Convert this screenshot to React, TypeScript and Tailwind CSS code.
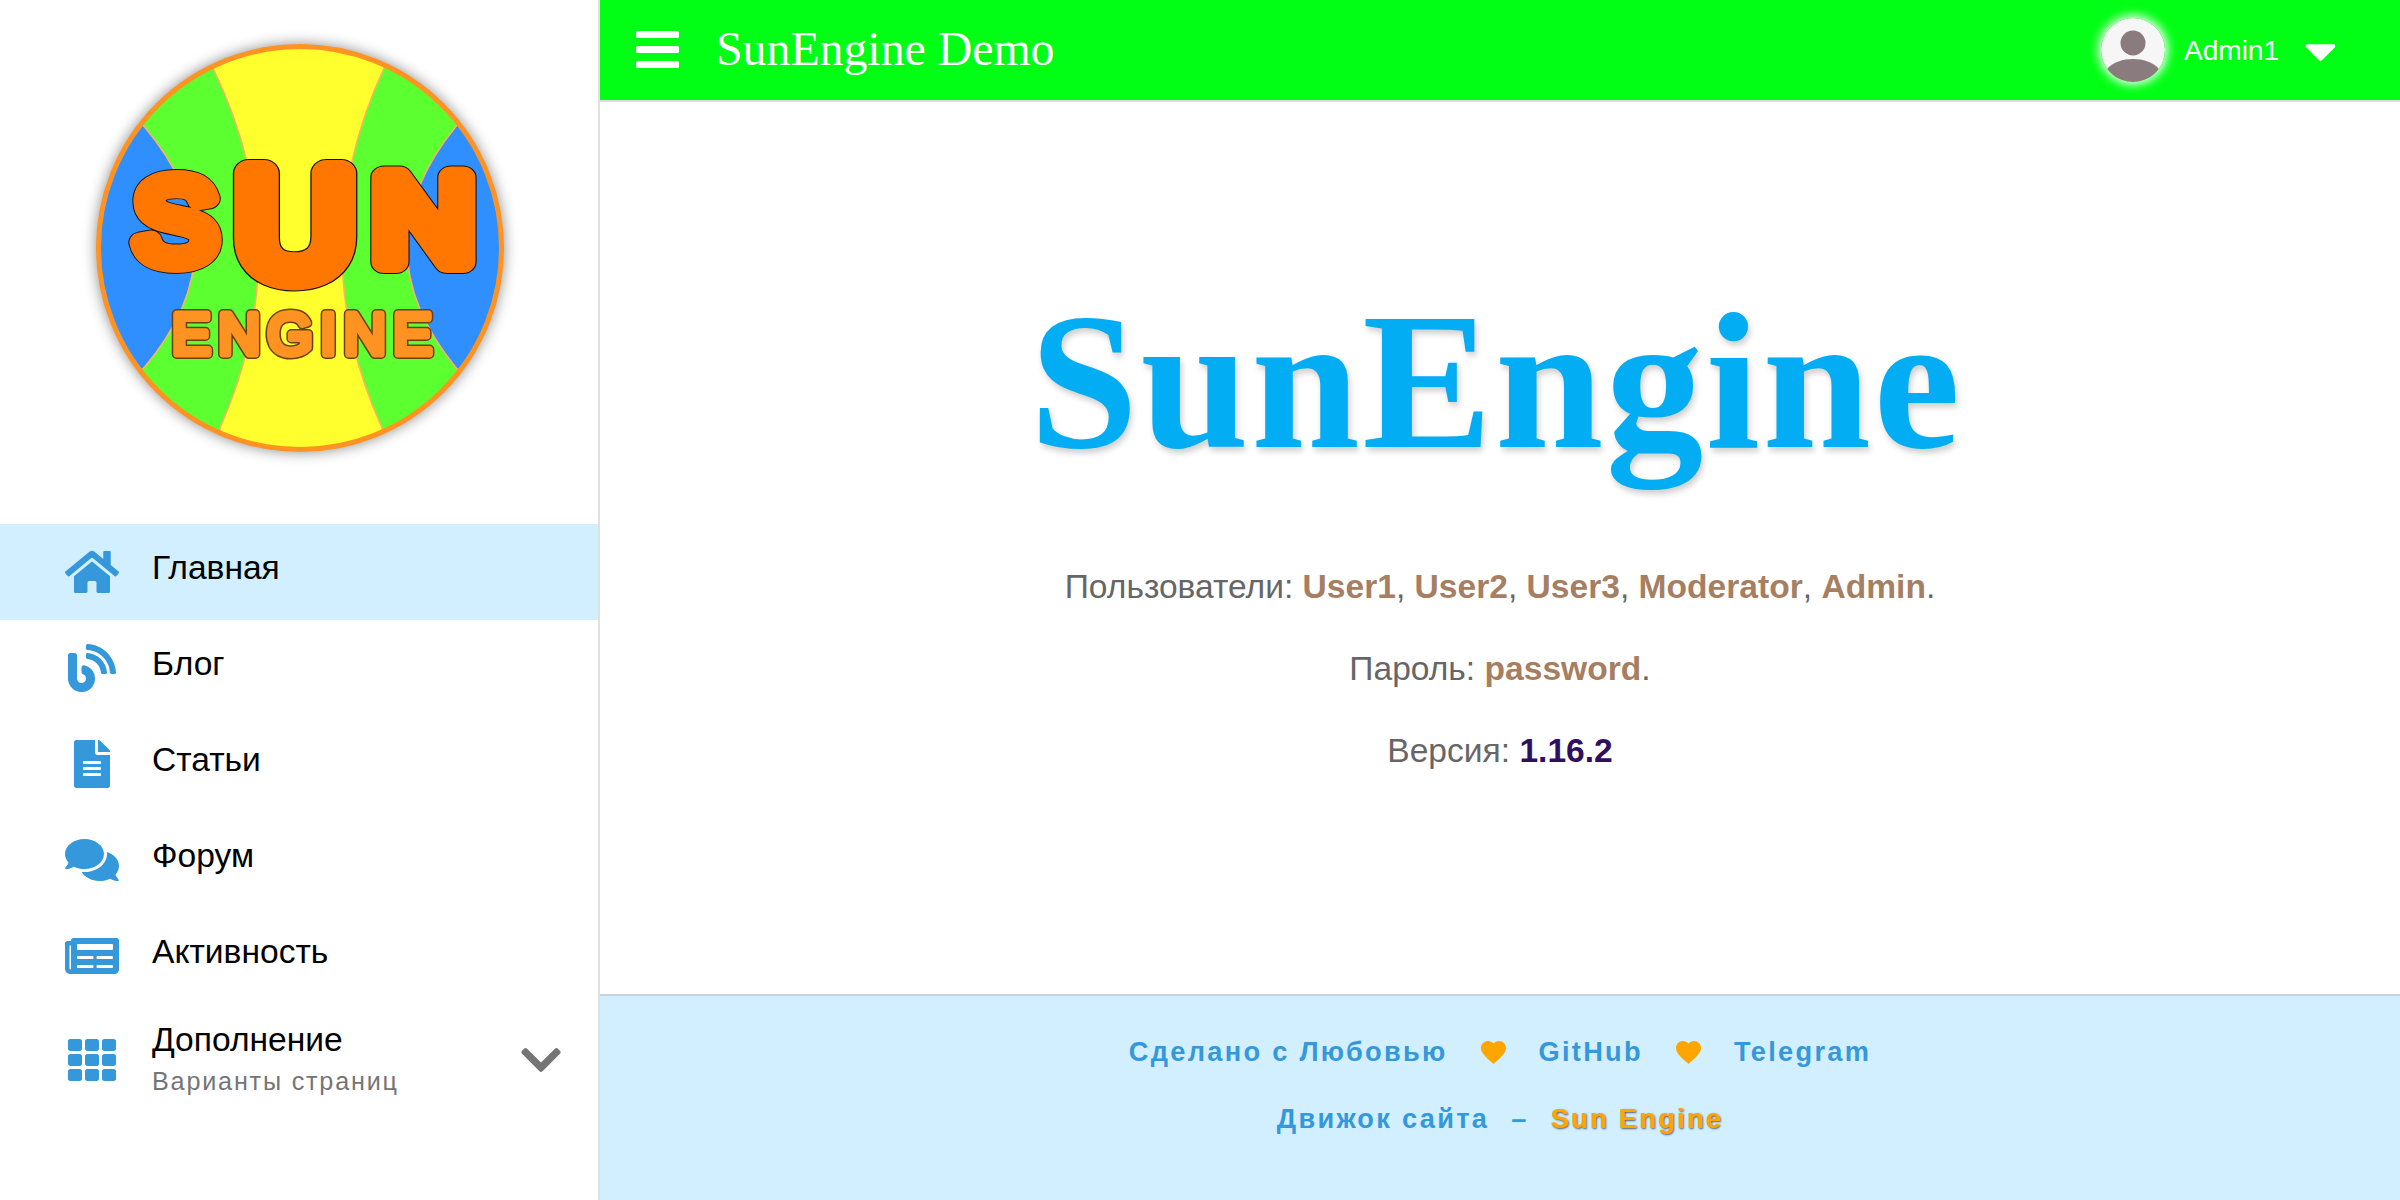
import React from "react";
import { FaHome, FaBlog, FaFileAlt, FaComments, FaNewspaper, FaTh, FaChevronDown, FaCaretDown } from "react-icons/fa";

function Logo() {
  const letter = { fontFamily: "'Liberation Sans', sans-serif", fontWeight: 400, strokeLinejoin: "round" as const, strokeLinecap: "round" as const };
  const Big = ({ ch, x, y, sx, sy, w }: { ch: string; x: number; y: number; sx: number; sy: number; w: number }) => (
    <g transform={`translate(${x} ${y}) scale(${sx} ${sy})`} style={letter} fontSize={100} textAnchor="middle">
      <text stroke="#111" strokeWidth={w + 1.6} fill="#111">{ch}</text>
      <text stroke="#ff7700" strokeWidth={w} fill="#ff7700">{ch}</text>
    </g>
  );
  return (
    <svg width="600" height="524" viewBox="0 0 600 524" className="block drop-shadow-[0_0_7px_rgba(0,0,0,0.45)]">
      <defs>
        <clipPath id="c"><circle cx="300" cy="248" r="202" /></clipPath>
      </defs>
      <circle cx="300" cy="248" r="203" fill="#5cff2f" />
      <g clipPath="url(#c)" stroke="#ffb060" strokeWidth="1.5">
        <path d="M143 125Q247 247 143 369L60 369L60 125Z" fill="#2f8fff" />
        <path d="M457 125Q357 247 457 369L540 369L540 125Z" fill="#2f8fff" />
        <path d="M213 68Q300 248 220 428L220 460L382 460L382 428Q301 248 384 68L384 30L213 30Z" fill="#ffff2e" />
      </g>
      <circle cx="300" cy="248" r="201.5" fill="none" stroke="#ff9322" strokeWidth="5" />
      <Big ch="S" x={175.5} y={262} sx={1.24} sy={1.17} w={17} />
      <Big ch="U" x={295} y={276} sx={1.63} sy={1.49} w={18} />
      <Big ch="N" x={423.5} y={262} sx={1.41} sy={1.22} w={18} />
      <text x="172" y="354" textLength="260" lengthAdjust="spacing" fontSize="58" stroke="#6b4010" strokeWidth="10" fill="#6b4010" style={letter}>ENGINE</text>
      <text x="172" y="354" textLength="260" lengthAdjust="spacing" fontSize="58" stroke="#ff9322" strokeWidth="7" fill="#ff9322" style={letter}>ENGINE</text>
    </svg>
  );
}

const items = [
  { label: "Главная", Icon: FaHome, active: true },
  { label: "Блог", Icon: FaBlog },
  { label: "Статьи", Icon: FaFileAlt },
  { label: "Форум", Icon: FaComments },
  { label: "Активность", Icon: FaNewspaper },
];

function Heart() {
  return (
    <svg viewBox="2 3 20 18.35" className="h-[23px] w-[25px] fill-[#ffa500]" preserveAspectRatio="none">
      <path d="M12 21.35l-1.45-1.32C5.4 15.36 2 12.28 2 8.5 2 5.42 4.42 3 7.5 3c1.74 0 3.41.81 4.5 2.09C13.09 3.81 14.76 3 16.5 3 19.58 3 22 5.42 22 8.5c0 3.78-3.4 6.86-8.55 11.54L12 21.35z" />
    </svg>
  );
}

export default function App() {
  const u = "font-bold text-[#a67f63]";
  return (
    <div className="flex h-[1200px] w-[2400px] overflow-hidden bg-white font-['Liberation_Sans',sans-serif]">
      <aside className="w-[600px] shrink-0 border-r-2 border-[#e0e0e0] bg-white">
        <Logo />
        <nav>
          {items.map(({ label, Icon, active }) => (
            <div key={label} className={`flex h-[96px] items-center ${active ? "bg-[#d2efff]" : ""}`}>
              <span className="flex w-[152px] justify-center pl-[32px] text-[#3498db]">
                <Icon className="h-[48px] w-[54px]" />
              </span>
              <span className="pb-[9px] text-[33.6px] leading-[48px] text-black">{label}</span>
            </div>
          ))}
          <div className="flex h-[112px] items-center">
            <span className="flex w-[152px] justify-center pl-[32px] text-[#3498db]">
              <FaTh className="h-[48px] w-[48px]" />
            </span>
            <div className="flex-1">
              <div className="text-[33.6px] leading-[35px] text-black">Дополнение</div>
              <div className="mt-[6px] text-[25.2px] leading-[36px] tracking-[1.8px] text-[#757575]">Варианты страниц</div>
            </div>
            <span className="pr-[34px] text-[46px] text-[#757575]">
              <FaChevronDown />
            </span>
          </div>
        </nav>
      </aside>

      <div className="flex min-w-0 flex-1 flex-col">
        <header className="flex h-[102px] shrink-0 items-center border-b-2 border-[#dddddd] bg-[#00ff14] text-white">
          <svg viewBox="0 0 43 38" className="ml-[36px] h-[38px] w-[43px] fill-white">
            <rect x="0" y="0" width="43" height="7" rx="1.5" />
            <rect x="0" y="15" width="43" height="7" rx="1.5" />
            <rect x="0" y="30" width="43" height="7" rx="1.5" />
          </svg>
          <span className="ml-[37px] pb-[3px] font-['Liberation_Serif',serif] text-[47.8px] leading-none">SunEngine Demo</span>
          <div className="ml-auto flex items-center">
            <svg viewBox="0 0 64 64" className="h-[64px] w-[64px] rounded-full shadow-[0_0_10px_3px_rgba(255,255,255,0.9)]">
              <circle cx="32" cy="32" r="32" fill="#f7f6f7" />
              <circle cx="32" cy="25" r="12.5" fill="#8a7c7e" />
              <path d="M6 51C12 44 22 41 32 41S52 44 58 51A32 32 0 0 1 6 51Z" fill="#8a7c7e" />
            </svg>
            <span className="ml-[19px] pt-[1px] text-[28px]">Admin1</span>
            <span className="mr-[54px] ml-[16px] text-[51px]"><FaCaretDown /></span>
          </div>
        </header>

        <main className="flex flex-1 flex-col items-center pt-[172px] text-[33.6px] text-[#666666]">
          <h1 className="mr-[8px] font-['Liberation_Serif',serif] text-[195px] leading-[1.1] font-bold tracking-[2.5px] text-[#03adf4] [text-shadow:2px_4px_6px_rgba(0,0,0,0.2)]">
            SunEngine
          </h1>
          <p className="mt-[74px] leading-[48px]">
            Пользователи: <b className={u}>User1</b>, <b className={u}>User2</b>, <b className={u}>User3</b>, <b className={u}>Moderator</b>, <b className={u}>Admin</b>.
          </p>
          <p className="mt-[34px] leading-[48px]">
            Пароль: <b className={u}>password</b>.
          </p>
          <p className="mt-[34px] leading-[48px]">
            Версия: <b className="font-bold text-[#2f0f5f]">1.16.2</b>
          </p>
        </main>

        <footer className="flex h-[206px] shrink-0 flex-col items-center border-t-2 border-[#c5d5dd] bg-[#d2efff] pt-[38px] text-[27.2px] font-bold tracking-[2.3px] text-[#3498db]">
          <div className="flex h-[36px] items-center gap-[33px]">
            <span>Сделано с Любовью</span>
            <Heart />
            <span>GitHub</span>
            <Heart />
            <span>Telegram</span>
          </div>
          <div className="mt-[31px] flex h-[36px] items-center gap-[22px]">
            <span>Движок сайта</span>
            <span>–</span>
            <span className="text-[#ffa500] [text-shadow:1px_1px_2px_rgba(0,0,0,0.6)]">Sun Engine</span>
          </div>
        </footer>
      </div>
    </div>
  );
}
